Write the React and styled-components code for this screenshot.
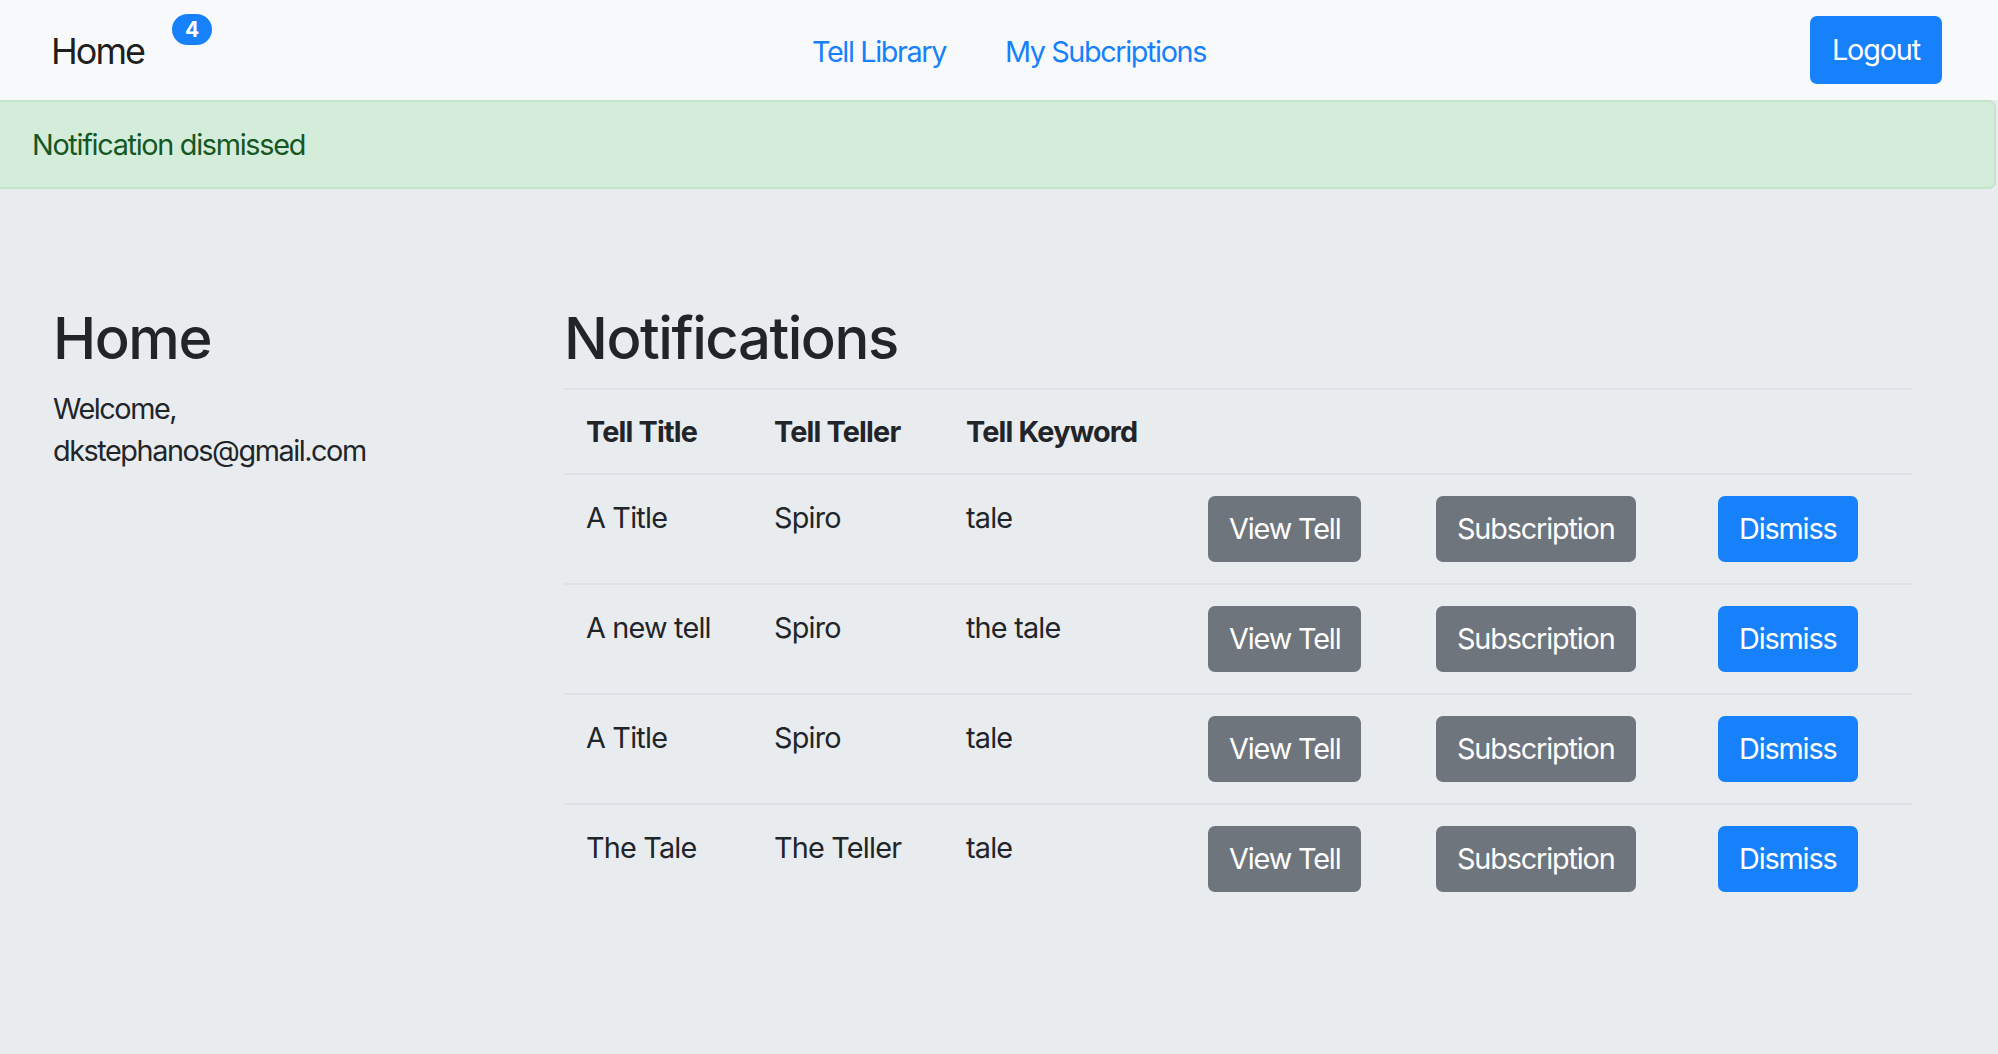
import styled, { createGlobalStyle } from "styled-components";

const GlobalStyle = createGlobalStyle`
  html, body {
    margin: 0;
    padding: 0;
    background: #e9ecef;
    font-family: Inter, "Noto Sans", "Liberation Sans", sans-serif;
    color: #212529;
    letter-spacing: -0.05em;
  }
  * { box-sizing: border-box; }
`;

const notifications = [
  { title: "A Title", teller: "Spiro", keyword: "tale" },
  { title: "A new tell", teller: "Spiro", keyword: "the tale" },
  { title: "A Title", teller: "Spiro", keyword: "tale" },
  { title: "The Tale", teller: "The Teller", keyword: "tale" },
];

const Page = styled.div`
  min-height: 1054px;
  display: flex;
  flex-direction: column;
  overflow: hidden;
`;

const Navbar = styled.nav`
  height: 100px;
  background: #f8f9fa;
  display: flex;
  align-items: center;
  padding: 0 56px 0 51px;
`;

const Brand = styled.div`
  position: relative;
  flex: 0 0 761px;
  font-size: 36px;
  line-height: 1.5;
  letter-spacing: -0.055em;
  color: rgba(0, 0, 0, 0.9);
  padding-top: 2px;
`;

const Badge = styled.span`
  position: absolute;
  left: 121px;
  top: -8px;
  width: 40px;
  height: 31px;
  border-radius: 16px;
  background: #1681fb;
  color: #fff;
  font-size: 21px;
  font-weight: 700;
  letter-spacing: 0;
  display: flex;
  align-items: center;
  justify-content: center;
`;

const NavLinks = styled.div`
  display: flex;
  gap: 59px;
  flex: 1;
  padding-top: 3px;
`;

const NavLink = styled.a`
  color: #1681fb;
  font-size: 28.8px;
  line-height: 1.5;
  letter-spacing: -0.048em;
  text-decoration: none;
  cursor: pointer;
`;

const Button = styled.button`
  height: ${(p) => (p.$nav ? "68px" : "66px")};
  padding: 0 ${(p) => (p.$nav ? "22px" : "21px")};
  border: none;
  border-radius: 7px;
  background: ${(p) => (p.$variant === "secondary" ? "#6e757c" : "#1681fb")};
  color: #fff;
  font-family: inherit;
  font-size: 28.8px;
  letter-spacing: -0.04em;
  line-height: 1.5;
  cursor: pointer;
`;

const Alert = styled.div`
  margin: 0 2px 0 -8px;
  padding: 21px 38px;
  background: #d4edda;
  border: 2px solid #c3e6cb;
  border-radius: 7px;
  color: #155724;
  font-size: 28.8px;
  line-height: 43px;
  letter-spacing: -0.045em;
`;

const Main = styled.main`
  flex: 1;
  background: #e9ecef;
  padding: 115px 86px 40px 53px;
  display: grid;
  grid-template-columns: 511px 1fr;
`;

const Heading = styled.h2`
  margin: 0 0 14px;
  font-size: 58px;
  font-weight: 500;
  line-height: 1.2;
  letter-spacing: -0.025em;
`;

const Text = styled.p`
  margin: 0;
  font-size: 28.8px;
  line-height: 42px;
  letter-spacing: -0.05em;
`;

const Table = styled.table`
  width: 1348px;
  border-collapse: collapse;
  table-layout: fixed;
  font-size: 28.8px;
  line-height: 43px;
`;

const Th = styled.th`
  text-align: left;
  font-weight: 700;
  padding: 20px 22px;
  border-top: 2px solid #dde1e5;
  border-bottom: 2px solid #dde1e5;
`;

const Td = styled.td`
  padding: 21px 22px;
  vertical-align: top;
  border-bottom: 2px solid #dde1e5;
  white-space: nowrap;

  tr:last-child > & {
    border-bottom: none;
  }
`;

const widths = [188, 192, 242, 228, 282, 216];

export default function App() {
  return (
    <Page>
      <GlobalStyle />
      <Navbar>
        <Brand>
          Home
          <Badge>4</Badge>
        </Brand>
        <NavLinks>
          <NavLink>Tell Library</NavLink>
          <NavLink>My Subcriptions</NavLink>
        </NavLinks>
        <Button $nav>Logout</Button>
      </Navbar>

      <Alert>Notification dismissed</Alert>

      <Main>
        <div>
          <Heading>Home</Heading>
          <Text>Welcome,</Text>
          <Text>dkstephanos@gmail.com</Text>
        </div>
        <div>
          <Heading>Notifications</Heading>
          <Table>
            <colgroup>
              {widths.map((w, i) => (
                <col key={i} style={{ width: w }} />
              ))}
            </colgroup>
            <thead>
              <tr>
                <Th>Tell Title</Th>
                <Th>Tell Teller</Th>
                <Th>Tell Keyword</Th>
                <Th />
                <Th />
                <Th />
              </tr>
            </thead>
            <tbody>
              {notifications.map((n, i) => (
                <tr key={i}>
                  <Td>{n.title}</Td>
                  <Td>{n.teller}</Td>
                  <Td>{n.keyword}</Td>
                  <Td>
                    <Button $variant="secondary">View Tell</Button>
                  </Td>
                  <Td>
                    <Button $variant="secondary">Subscription</Button>
                  </Td>
                  <Td>
                    <Button>Dismiss</Button>
                  </Td>
                </tr>
              ))}
            </tbody>
          </Table>
        </div>
      </Main>
    </Page>
  );
}
